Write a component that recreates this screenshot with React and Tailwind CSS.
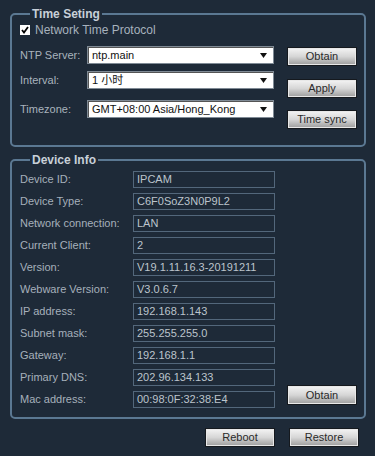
import React from "react";

const font = { fontFamily: '"Liberation Sans", "Noto Sans CJK SC", Arial, sans-serif' };

function Btn({ children, className = "" }) {
  return (
    <div
      className={
        "flex items-center justify-center w-[70px] h-[19px] border border-[#15191e] bg-gradient-to-b from-[#f4f4f4] via-[#d6d6d6] to-[#9c9c9c] text-[11px] text-[#2a2a2a] shadow-[inset_0_0_0_1px_#e8e8e8] " +
        className
      }
    >
      {children}
    </div>
  );
}

function Select({ value }) {
  return (
    <div className="flex items-center justify-between w-[187px] h-[18px] bg-white border border-[#7f8a95] shadow-[inset_1px_1px_0_#555] pl-[4px] pr-[6px] text-[11px] text-[#111]">
      <span>{value}</span>
      <svg width="7" height="5" viewBox="0 0 7 5">
        <path d="M0 0 H7 L3.5 5 Z" fill="#111" />
      </svg>
    </div>
  );
}

function SelRow({ label, value, className = "" }) {
  return (
    <div className={"flex items-center " + className}>
      <div className="w-[67px] text-[11px] text-[#a9b3bd]">{label}</div>
      <Select value={value} />
    </div>
  );
}

const rows = [
  ["Device ID:", "IPCAM"],
  ["Device Type:", "C6F0SoZ3N0P9L2"],
  ["Network connection:", "LAN"],
  ["Current Client:", "2"],
  ["Version:", "V19.1.11.16.3-20191211"],
  ["Webware Version:", "V3.0.6.7"],
  ["IP address:", "192.168.1.143"],
  ["Subnet mask:", "255.255.255.0"],
  ["Gateway:", "192.168.1.1"],
  ["Primary DNS:", "202.96.134.133"],
  ["Mac address:", "00:98:0F:32:38:E4"],
];

export default function App() {
  return (
    <div style={font} className="w-[375px] h-[456px] bg-[#1e2a38] pt-[7px] px-[10px] overflow-hidden">
      <fieldset className="h-[140px] border-2 border-[#5b7892] rounded-[5px] pl-[8px] pr-[7px]">
        <legend className="ml-[10px] px-[2px] text-[12px] leading-[14px] font-bold text-[#c8d0d8]">Time Seting</legend>
        <div className="flex">
          <div className="flex flex-col w-[267px]">
            <div className="flex items-center mt-[3px] h-[12px]">
              <div className="w-[10px] h-[10px] bg-white flex items-center justify-center">
                <svg width="8" height="8" viewBox="0 0 8 8">
                  <path d="M1 4 L3 6.5 L7 1" stroke="#000" strokeWidth="1.8" fill="none" />
                </svg>
              </div>
              <span className="ml-[5px] text-[12px] text-[#a7b2bd]">Network Time Protocol</span>
            </div>
            <SelRow label="NTP Server:" value="ntp.main" className="mt-[10px]" />
            <SelRow label="Interval:" value="1 小时" className="mt-[7px]" />
            <SelRow label="Timezone:" value="GMT+08:00 Asia/Hong_Kong" className="mt-[11px]" />
          </div>
          <div className="flex flex-col pt-[26px]">
            <Btn>Obtain</Btn>
            <Btn className="mt-[13px]">Apply</Btn>
            <Btn className="mt-[12px]">Time sync</Btn>
          </div>
        </div>
      </fieldset>
      <fieldset className="mt-[6px] h-[266px] border-2 border-[#5b7892] rounded-[5px] pl-[8px] pr-[7px]">
        <legend className="ml-[10px] px-[2px] text-[12px] leading-[14px] font-bold text-[#c8d0d8]">Device Info</legend>
        <div className="flex">
          <div className="flex flex-col gap-[5px] mt-[4px]">
            {rows.map(([l, v]) => (
              <div key={l} className="flex items-center h-[17px]">
                <div className="w-[113px] text-[11px] text-[#a6b0bb] whitespace-nowrap">{l}</div>
                <div className="w-[142px] h-[17px] border border-[#53677b] flex items-center pl-[3px] text-[11px] text-[#bcc4cc]">
                  {v}
                </div>
              </div>
            ))}
          </div>
          <div className="flex flex-col justify-end ml-[12px] pb-[3px]">
            <Btn className="h-[20px]">Obtain</Btn>
          </div>
        </div>
      </fieldset>
      <div className="flex justify-end gap-[14px] mt-[9px] pr-[6px]">
        <Btn>Reboot</Btn>
        <Btn>Restore</Btn>
      </div>
    </div>
  );
}
